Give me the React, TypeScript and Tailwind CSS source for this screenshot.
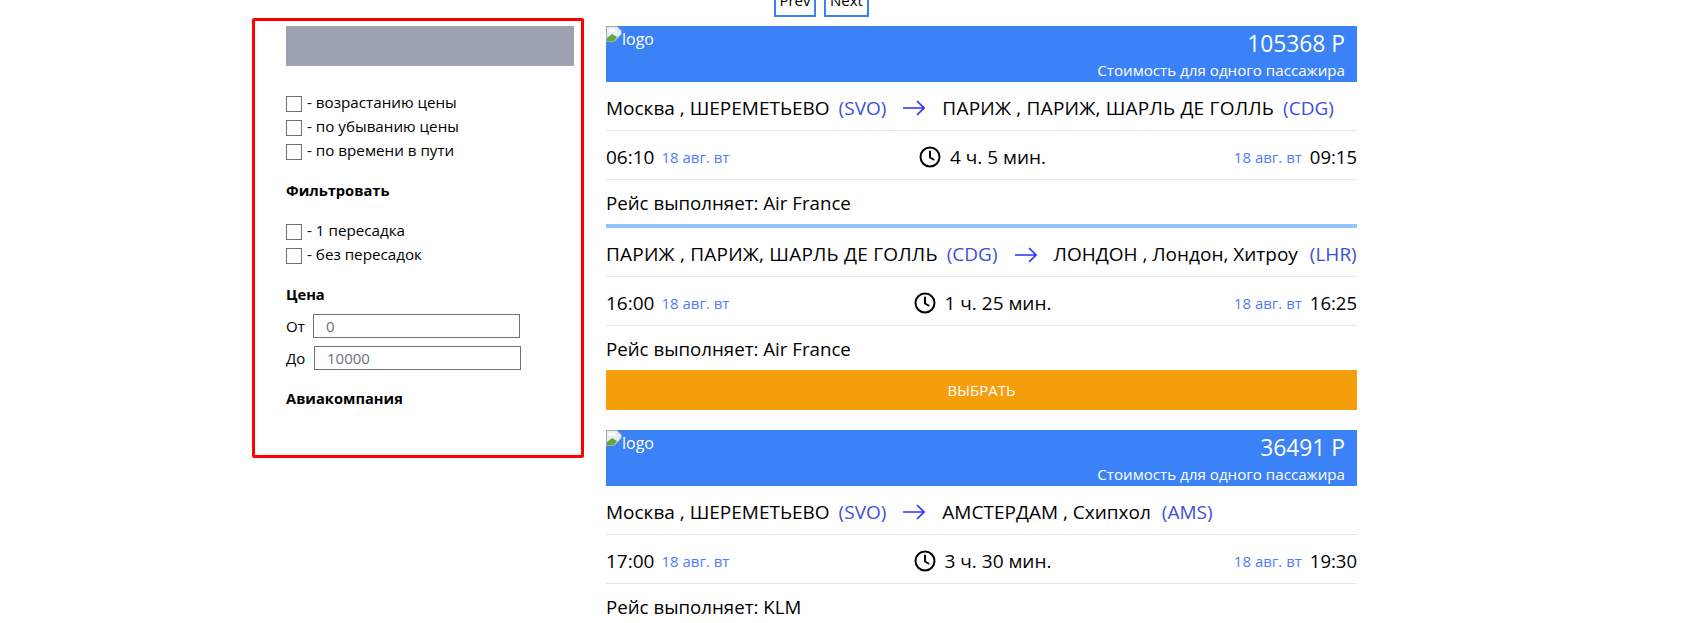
import React from "react";

const font = { fontFamily: '"Open Sans", "Noto Sans", sans-serif' };

function Clock() {
  return (
    <svg width="22" height="22" viewBox="0 0 22 22" fill="none" stroke="#000" strokeWidth="2" strokeLinecap="round" strokeLinejoin="round" className="shrink-0">
      <circle cx="11" cy="11" r="9.5" />
      <path d="M11 5.5V11.5L14.5 13.5" />
    </svg>
  );
}

function Arrow() {
  return (
    <svg width="22" height="16" viewBox="0 0 22 16" fill="none" stroke="#2e2eff" strokeWidth="1.6" className="shrink-0">
      <path d="M0 8H21M14 1L21 8L14 15" />
    </svg>
  );
}

function BrokenImage() {
  return (
    <svg width="16" height="16" viewBox="0 0 16 16" className="shrink-0">
      <path d="M0.5 0.5H11L15.5 5V8L8 15.5H0.5Z" fill="#e8eef8" stroke="#a8a8a8" />
      <path d="M1 15L1 12L6 8L11 11L8 15Z" fill="#5fa83c" />
      <path d="M3 3H9V6H3Z" fill="#ffffff" />
    </svg>
  );
}

const wide = "tracking-[0.22px]";

function Route({
  from,
  fromCode,
  to,
  toCode,
  pad = "pt-[4px]",
  fromClass = "",
  toClass = "",
  toCodeGap = "ml-[9px]",
}: {
  from: string;
  fromCode: string;
  to: string;
  toCode: string;
  pad?: string;
  fromClass?: string;
  toClass?: string;
  toCodeGap?: string;
}) {
  return (
    <div className={`flex h-[49px] items-center border-b border-[#e5e7eb] text-[19px] text-black whitespace-nowrap ${pad}`}>
      <span className={fromClass}>{from}</span>
      <span className="ml-[9px] text-[#3d4fd8]">({fromCode})</span>
      <span className="mx-[17px]"><Arrow /></span>
      <span className={toClass}>{to}</span>
      <span className={`${toCodeGap} text-[#3d4fd8]`}>({toCode})</span>
    </div>
  );
}

function Times({ dep, arr, dur }: { dep: string; arr: string; dur: string }) {
  return (
    <div className="flex h-[49px] items-center justify-between border-b border-[#e5e7eb] pt-[4px] whitespace-nowrap">
      <div className="flex items-center w-[200px]">
        <span className="text-[19px] text-black">{dep}</span>
        <span className="ml-[7px] text-[15px] text-[#4f7cf7]">18 авг. вт</span>
      </div>
      <div className="ml-[2px] flex items-center gap-[9px] text-[19px] text-black">
        <Clock />
        <span>{dur}</span>
      </div>
      <div className="flex items-center justify-end w-[200px]">
        <span className="text-[15px] text-[#4f7cf7]">18 авг. вт</span>
        <span className="ml-[8px] text-[18.5px] text-black">{arr}</span>
      </div>
    </div>
  );
}

function Carrier({ name }: { name: string }) {
  return <div className="flex h-[44px] items-center pt-[2px] text-[18.7px] text-black">Рейс выполняет: {name}</div>;
}

function CardHeader({ price }: { price: string }) {
  return (
    <div className="flex h-[56px] justify-between bg-[#3b82f6] text-white">
      <div className="flex items-start text-[16px] leading-[26px]">
        <BrokenImage />
        <span>logo</span>
      </div>
      <div className="flex flex-col items-end pr-[12px] pt-[2px]">
        <span className="text-[22.8px] leading-[32px]">{price}</span>
        <span className="text-[15.15px] leading-[20px]">Стоимость для одного пассажира</span>
      </div>
    </div>
  );
}

function Check({ label }: { label: string }) {
  return (
    <label className="flex h-[24px] items-center text-[15.2px] text-black">
      <span className="h-[16px] w-[16px] border border-[#6b7280] bg-white" />
      <span className="ml-[5px] -translate-y-[2px]">- {label}</span>
    </label>
  );
}

function PriceInput({ label, value, offset }: { label: string; value: string; offset: string }) {
  return (
    <div className="flex h-[24px] items-center text-[15px] text-black">
      <span className={offset}>{label}</span>
      <div className="flex h-[24px] w-[207px] items-center border border-[#6b7280] pl-[12px] text-[15px] text-[#6b7280]">{value}</div>
    </div>
  );
}

export default function App() {
  return (
    <div className="h-[623px] overflow-hidden bg-white" style={font}>
      <div className="flex pl-[252px]">
        <aside className="mt-[18px] h-[440px] w-[332px] rounded-[2px] border-[3px] border-[#ff0000] pl-[31px] pr-[7px] pt-[5px]">
          <div className="h-[40px] w-[288px] bg-[#9ca3af]" />
          <div className="mt-[26px] flex flex-col">
            <Check label="возрастанию цены" />
            <Check label="по убыванию цены" />
            <Check label="по времени в пути" />
          </div>
          <h3 className="mt-[14px] text-[14.7px] font-bold leading-[24px] text-black">Фильтровать</h3>
          <div className="mt-[18px] flex flex-col">
            <Check label="1 пересадка" />
            <Check label="без пересадок" />
          </div>
          <h3 className="mt-[14px] text-[14.7px] font-bold leading-[24px] text-black">Цена</h3>
          <div className="mt-[8px] flex flex-col gap-[8px]">
            <PriceInput label="От" value="0" offset="w-[27px]" />
            <PriceInput label="До" value="10000" offset="w-[28px]" />
          </div>
          <h3 className="mt-[16px] text-[14.7px] font-bold leading-[24px] text-black">Авиакомпания</h3>
        </aside>
        <main className="ml-[22px] w-[751px]">
          <div className="mt-[-13px] mb-[9px] flex h-[30px] items-start pl-[168px] text-[15px] text-black">
            <button className="flex h-[30px] w-[42px] items-center justify-center border-2 border-[#3b82f6] pb-[4px]">Prev</button>
            <button className="ml-[8px] flex h-[30px] w-[45px] items-center justify-center border-2 border-[#3b82f6] pb-[4px]">Next</button>
          </div>
          <CardHeader price="105368 Р" />
          <Route from="Москва , ШЕРЕМЕТЬЕВО" fromCode="SVO" to="ПАРИЖ , ПАРИЖ, ШАРЛЬ ДЕ ГОЛЛЬ" toCode="CDG" toClass={wide} />
          <Times dep="06:10" arr="09:15" dur="4 ч. 5 мин." />
          <Carrier name="Air France" />
          <div className="h-[4px] bg-[#93c5fd]" />
          <Route from="ПАРИЖ , ПАРИЖ, ШАРЛЬ ДЕ ГОЛЛЬ" fromCode="CDG" to="ЛОНДОН , Лондон, Хитроу" toCode="LHR" pad="pt-[5px]" fromClass={wide} toCodeGap="ml-[12px]" />
          <Times dep="16:00" arr="16:25" dur="1 ч. 25 мин." />
          <Carrier name="Air France" />
          <button className="flex h-[40px] w-full items-center justify-center bg-[#f59e0b] text-[15px] text-white">ВЫБРАТЬ</button>
          <div className="mt-[20px]">
            <CardHeader price="36491 Р" />
            <Route from="Москва , ШЕРЕМЕТЬЕВО" fromCode="SVO" to="АМСТЕРДАМ , Схипхол" toCode="AMS" toCodeGap="ml-[11px]" />
            <Times dep="17:00" arr="19:30" dur="3 ч. 30 мин." />
            <Carrier name="KLM" />
          </div>
        </main>
      </div>
    </div>
  );
}
